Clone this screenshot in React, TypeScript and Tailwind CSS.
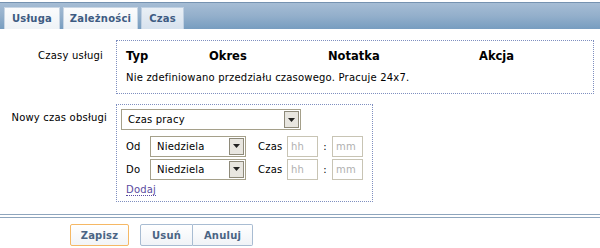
import React from 'react';

const font = { fontFamily: '"DejaVu Sans", Verdana, sans-serif' };

function Select({ value, w }: { value: string; w: string }) {
  return (
    <div className={`flex items-stretch h-[21px] border border-[#a5a08a] bg-white ${w}`}>
      <span className="flex-1 pl-[6px] flex items-center text-[10px] tracking-[0.2px] text-black">{value}</span>
      <span className="w-[15px] m-[1px] bg-[#e8e6e0] border border-[#8e8a7a] flex items-center justify-center">
        <svg width="7" height="4" viewBox="0 0 7 4"><path d="M0 0h7L3.5 4z" fill="#222" /></svg>
      </span>
    </div>
  );
}

function TimeInput({ ph }: { ph: string }) {
  return (
    <div className="w-[31px] h-[21px] border border-[#c8c4b4] bg-white flex items-center pl-[3px] text-[10px] tracking-[0.2px] text-[#b0b0b0]">
      {ph}
    </div>
  );
}

function DayRow({ label }: { label: string }) {
  return (
    <div className="flex items-center h-[22px]">
      <span className="w-[29px] pl-[5px] text-black">{label}</span>
      <Select value="Niedziela" w="w-[96px]" />
      <span className="ml-[12px] w-[29px] text-black">Czas</span>
      <TimeInput ph="hh" />
      <span className="w-[14px] text-center text-black">:</span>
      <TimeInput ph="mm" />
    </div>
  );
}

export default function App() {
  return (
    <div className="w-[600px] h-[248px] bg-white overflow-hidden text-[10px] tracking-[0.2px]" style={font}>
      {/* tab bar */}
      <div className="mt-[2px] h-[27px] border-t border-[#7693b1] bg-gradient-to-b from-[#a6bdd5] via-[#93afcb] to-[#779dc0] flex items-end pl-[4px] gap-[3px]">
        {[
          ['Usługa', 'w-[56px]', false],
          ['Zależności', 'w-[75px]', false],
          ['Czas', 'w-[43px]', true],
        ].map(([t, w, active]) => (
          <div
            key={t as string}
            className={`${w} h-[22px] flex items-center justify-center font-bold text-[10px] text-[#3d5b82] border border-b-0 ${
              active ? 'bg-gradient-to-b from-[#e9eff5] to-[#d7e2ee] border-[#bfd0e2]' : 'bg-gradient-to-b from-[#fbfcfd] to-[#eef2f6] border-[#c9d6e4]'
            }`}
          >
            {t}
          </div>
        ))}
      </div>

      {/* form */}
      <div className="pt-[11px] flex flex-col gap-[10px]">
        <div className="flex">
          <div className="w-[103px] text-right pt-[8px] text-black">Czasy usługi</div>
          <div className="ml-[13px] w-[478px] h-[54px] border border-dotted border-[#7f8fc0] pl-[9px]">
            <div className="flex font-bold text-[11.5px] tracking-normal text-black pt-[7px] h-[29px]">
              <span className="w-[83px]">Typ</span>
              <span className="w-[119px]">Okres</span>
              <span className="w-[151px]">Notatka</span>
              <span>Akcja</span>
            </div>
            <div className="text-black">Nie zdefiniowano przedziału czasowego. Pracuje 24x7.</div>
          </div>
        </div>

        <div className="flex">
          <div className="w-[107px] text-right pt-[6px] text-black">Nowy czas obsługi</div>
          <div className="ml-[9px] w-[257px] h-[98px] border border-dotted border-[#7f8fc0] px-[4px] pt-[4px]">
            <Select value="Czas pracy" w="w-[180px]" />
            <div className="mt-[5px] flex flex-col gap-[1px]">
              <DayRow label="Od" />
              <DayRow label="Do" />
            </div>
            <div className="pl-[5px] mt-[2px]">
              <span className="text-[#5b4ba0] border-b border-dotted border-[#5b4ba0]">Dodaj</span>
            </div>
          </div>
        </div>
      </div>

      {/* footer */}
      <div className="mt-[12px] h-[4px] border-t border-b border-[#8ea5bd]" />
      <div className="mt-[6px] flex pl-[70px]">
        <button className="w-[59px] h-[22px] border border-[#f5b865] bg-gradient-to-b from-[#ffffff] to-[#f2f4f7] rounded-[2px] font-bold text-[#4a6484] text-[10px]">
          Zapisz
        </button>
        <button className="ml-[11px] w-[53px] h-[22px] border border-[#a8bcd2] bg-gradient-to-b from-[#ffffff] to-[#f0f3f7] rounded-l-[2px] font-bold text-[#4a6484] text-[10px]">
          Usuń
        </button>
        <button className="w-[60px] h-[22px] border border-l-0 border-[#a8bcd2] bg-gradient-to-b from-[#ffffff] to-[#f0f3f7] rounded-r-[2px] font-bold text-[#4a6484] text-[10px]">
          Anuluj
        </button>
      </div>
    </div>
  );
}
